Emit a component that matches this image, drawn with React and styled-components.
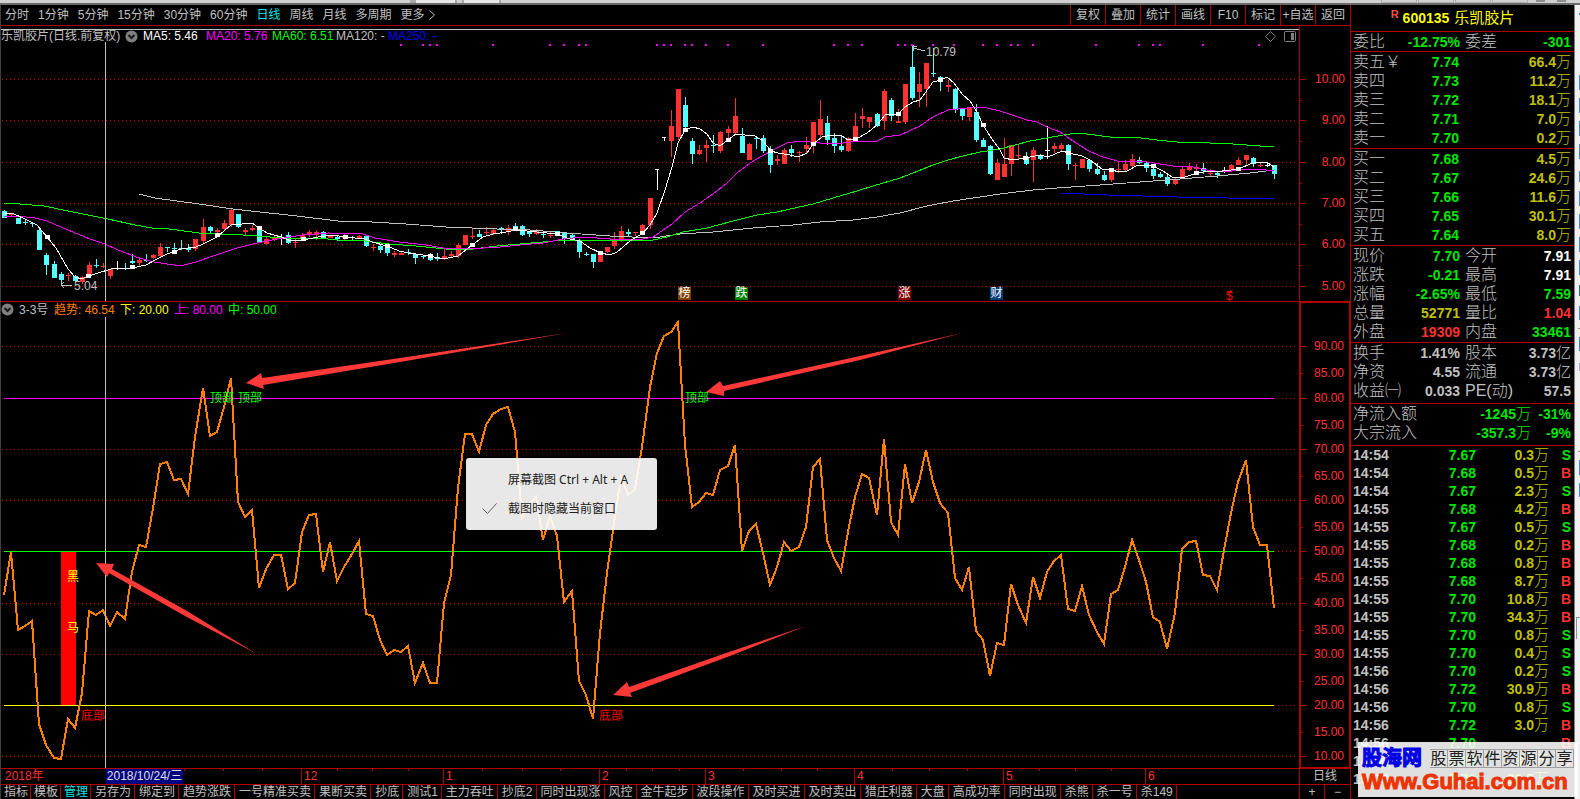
import React, {useState} from "react";
import styled, {createGlobalStyle, css} from "styled-components";

const GlobalStyle = createGlobalStyle`
    * {
        box-sizing: border-box;
    }

    body {
        margin: 0;
        background: #000000;
        color: #c0c0c0;
        font: 12px/14px "Liberation Sans", "Noto Sans CJK SC", sans-serif;
    }

    button {
        margin: 0;
        padding: 0;
        border: 0;
        background: none;
        color: inherit;
        font: inherit;
        white-space: nowrap;
        cursor: pointer;
    }
`;

const RED = "#b00000";
const UP = "#ff3232";
const DOWN = "#54ffff";
const GREEN = "#00e600";
const YELLOW = "#c0c000";

const Page = styled.div`
    display: flex;
    flex-direction: column;
    height: 100vh;
    min-height: 600px;
    overflow: hidden;
`;

const WindowEdge = styled.div`
    height: 5px;
    flex: none;
    background: #d0d0d0;
    border-bottom: 2px solid #6a6a6a;

    svg {
        display: block;
        width: 100%;
        height: 3px;
    }
`;

const Body = styled.div`
    display: flex;
    flex: 1;
    min-height: 0;
`;

const Main = styled.main`
    display: flex;
    flex-direction: column;
    flex: 1;
    min-width: 0;
    border-left: 1px solid #404040;
`;

const Toolbar = styled.nav`
    display: flex;
    justify-content: space-between;
    height: 21px;
    flex: none;
    border-bottom: 1px solid ${RED};
`;

const Periods = styled.div`
    display: flex;
    gap: 9px;
    padding-left: 4px;
`;

const PeriodButton = styled.button`
    color: ${p => p.$active ? "#00e6e6" : "#c0c0c0"};

    svg {
        margin-left: 4px;
        vertical-align: -1px;
    }
`;

const Actions = styled.div`
    display: flex;
`;

const ActionButton = styled.button`
    width: 35px;
    border-left: 1px solid ${RED};
`;

const Panel = styled.section`
    position: relative;
    display: flex;
    flex: ${p => p.$grow} 1 0;
    min-height: 0;
    border-bottom: ${p => p.$line ? `1px solid ${RED}` : "0"};
`;

const PanelBody = styled.div`
    display: flex;
    flex-direction: column;
    flex: 1;
    min-width: 0;
    padding-top: ${p => p.$inset ? "3px" : "0"};
`;

const Legend = styled.div`
    display: flex;
    justify-content: space-between;
    align-items: center;
    flex: none;
    height: ${p => p.$topLine ? "13px" : "15px"};
    border-top: ${p => p.$topLine ? "1px solid #c0c0c0" : "0"};
    white-space: nowrap;
`;

const LegendItems = styled.div`
    display: grid;
    grid-template-columns: ${p => p.$columns};
    align-items: center;
`;

const LegendItem = styled.span`
    color: ${p => p.$color};
`;

const IconButton = styled.button`
    display: flex;
    align-items: center;
`;

const LegendTools = styled.div`
    display: flex;
    gap: 8px;
    padding-right: 3px;
`;

const Plot = styled.div`
    position: relative;
    flex: 1;
    min-height: 0;

    > svg {
        position: absolute;
        width: 100%;
        height: 100%;
    }
`;

const Mark = styled.span`
    position: absolute;
    color: ${p => p.$color};
    font-size: 12px;
    line-height: 14px;
    white-space: nowrap;
`;

const Badge = styled(Mark)`
    width: 13px;
    height: 13px;
    line-height: 13px;
    text-align: center;
    color: #ffffff;
    background: ${p => p.$bg};
`;

const Axis = styled.div`
    position: relative;
    width: 51px;
    flex: none;
    border-left: 1px solid ${RED};
    color: ${UP};

    ${p => p.$framed && css`
        border: 1px solid ${RED};
        border-left-width: 2px;
    `}
`;

const AxisRow = styled.div`
    position: absolute;
    left: 0;
    right: 5px;
    display: flex;
    align-items: center;
    justify-content: space-between;
    height: 14px;
    margin-top: -7px;

    &::before {
        content: "";
        width: ${p => p.$minor ? "2px" : "5px"};
        height: 1px;
        background: ${RED};
    }
`;

const Popup = styled.div`
    position: absolute;
    left: 465px;
    top: 156px;
    width: 191px;
    padding: 7px 0;
    border-radius: 3px;
    background: rgba(255, 255, 255, .91);
    color: #202020;
    font-family: "Noto Sans", "Noto Sans CJK SC", sans-serif;
`;

const PopupItem = styled.button`
    display: grid;
    grid-template-columns: 26px 1fr;
    align-items: center;
    width: 100%;
    height: 29px;
    padding-left: 16px;
    text-align: left;
`;

const Timeline = styled.div`
    display: flex;
    height: 16px;
    flex: none;
    border-top: 1px solid ${RED};
`;

const TimeTrack = styled.div`
    position: relative;
    flex: 1;
    color: ${UP};
    line-height: 15px;
`;

const Month = styled.span`
    position: absolute;
    top: 0;
    height: 15px;
    padding-left: 2px;
    border-left: 1px solid ${p => p.$plain ? "transparent" : RED};
`;

const TimeTick = styled.span`
    position: absolute;
    top: 0;
    width: 1px;
    height: 2px;
    background: ${RED};
`;

const DateTag = styled(Month)`
    width: 77px;
    padding: 0;
    border-left: 0;
    background: #000080;
    color: #e0e0e0;
    text-align: center;
    white-space: nowrap;
`;

const TimeUnit = styled.div`
    width: 51px;
    border-left: 1px solid ${RED};
    line-height: 15px;
    text-align: center;
`;

const Tabs = styled.nav`
    display: flex;
    height: 15px;
    flex: none;
    border-top: 1px solid ${RED};
    overflow: hidden;
`;

const Tab = styled.button`
    padding: ${p => p.$tight ? "0 2px 0 3px" : "0 3px 0 4px"};
    border-right: 1px solid ${RED};
    color: ${p => p.$active ? "#00e6e6" : "#c0c0c0"};
`;

const ZoomButtons = styled.div`
    display: grid;
    grid-template-columns: 25px 26px;
    margin-left: auto;

    button {
        border-left: 1px solid ${RED};
    }
`;

const Side = styled.aside`
    position: relative;
    width: 224px;
    flex: none;
    border-left: 1px solid ${RED};
    overflow: hidden;
`;

const StockTitle = styled.h1`
    display: flex;
    align-items: center;
    justify-content: center;
    gap: 5px;
    height: 27px;
    margin: 0;
    padding-right: 20px;
    border-bottom: 1px solid ${RED};
    color: #ffff00;
    font-size: 14px;
    line-height: 26px;

    sup {
        margin: -8px -1px 0 0;
        color: #ff5050;
        font-size: 11px;
    }

    span {
        font-size: 15px;
        font-weight: 400;
    }
`;

const QuoteTable = styled.table`
    width: 100%;
    table-layout: fixed;
    border-collapse: separate;
    border-spacing: 0;
    border-bottom: ${p => p.$last ? "0" : `1px solid ${RED}`};
    padding-bottom: ${p => p.$gap || 0}px;

    tr {
        height: ${p => p.$row || 19}px;
    }

    th, td {
        padding: 0;
        line-height: 18px;
        white-space: nowrap;
    }
`;

const Label = styled.th`
    width: ${p => p.$width ? `${p.$width}px` : "auto"};
    text-align: left;
    font-size: 16px;
    font-weight: 300;

    && {
        padding-left: ${p => p.$second ? "5px" : "2px"};
    }
`;

const Value = styled.td`
    width: ${p => p.$width ? `${p.$width}px` : "auto"};
    color: ${p => p.$color || "#c0c0c0"};
    font-size: 14px;
    font-weight: 700;
    text-align: ${p => p.$align || "right"};

    && {
        padding-left: ${p => p.$align === "left" ? "2px" : "0"};
        padding-right: ${p => p.$edge ? "3px" : "0"};
    }
`;

const Unit = styled.span`
    font-size: 15px;
    font-weight: 300;
    line-height: 1;
`;

const Watermark = styled.a`
    position: absolute;
    right: 2px;
    bottom: 2px;
    width: 220px;
    height: 55px;
    padding: 5px 0 0 4px;
    background: rgba(255, 255, 255, .88);
    color: #ee3300;
    text-decoration: none;
    z-index: 2;
`;

const WatermarkTop = styled.span`
    display: flex;
    align-items: center;
    gap: 8px;
    height: 22px;

    strong {
        color: #0000e6;
        font-size: 20px;
        line-height: 22px;
        -webkit-text-stroke: 1px #0000e6;
    }
`;

const Slogan = styled.span`
    display: flex;
    color: #202020;
    font-size: 16px;
    line-height: 18px;

    span {
        width: 18px;
        height: 19px;
        border: 1px solid #a0a0a0;
        border-left-width: 0;
        text-align: center;
    }
`;

const Address = styled.span`
    display: block;
    font-size: 22px;
    font-weight: 700;
    line-height: 26px;
    -webkit-text-stroke: 1px #ee3300;
`;

const Gutter = styled.div`
    width: 6px;
    flex: none;
    background: #f0f0f0;
    border-left: 1px solid #808080;

    svg {
        display: block;
    }
`;

const periods = ["分时", "1分钟", "5分钟", "15分钟", "30分钟", "60分钟", "日线", "周线", "月线", "多周期", "更多"];
const actions = ["复权", "叠加", "统计", "画线", "F10", "标记", "+自选", "返回"];
const baseTabs = ["指标", "模板", "管理"];
const tabs = ["另存为", "绑定到", "趋势涨跌", "一号精准买卖", "果断买卖", "抄底", "测试1", "主力吞吐", "抄底2",
    "同时出现涨", "风控", "金牛起步", "波段操作", "及时买进", "及时卖出", "猎庄利器", "大盘", "高成功率", "同时出现", "杀熊", "杀一号", "杀149"];

// one bar: high, low, body top, body bottom, kind (u up, d down, w flat, t limit)
const bars = `210 218 211 218 d|213 217 214 215 u|218 224 218 224 d|220 225 222 223 d|222 227 223 224 d|229 250 230 250 d|253 275 255 265 d|261 278 264 278 d|272 285 274 280 d|273 281 275 276 u
275 282 276 281 d|276 284 277 282 u|262 276 265 275 u|259 268 265 266 d|263 268 266 267 u|269 279 269 276 u|261 270 268 269 w|263 270 268 269 d|254 264 261 263 d|257 266 260 263 u
254 262 260 261 d|254 259 255 258 u|243 257 247 256 u|247 252 247 248 d|243 251 248 249 d|240 250 248 249 d|244 252 248 250 d|239 251 239 249 u|219 243 227 241 u|226 233 227 231 d
228 235 230 232 u|220 231 223 229 u|209 227 210 225 u|214 228 214 227 d|228 236 230 232 u|225 231 228 230 u|228 243 230 242 d|237 245 239 244 u|236 241 238 239 u|234 245 237 238 w
232 244 235 243 d|238 248 242 243 u|233 240 235 239 u|230 237 232 235 u|230 240 232 235 u|231 239 232 238 d|235 238 235 238 u|236 241 237 239 d|234 240 236 238 u|236 240 237 238 d
235 239 236 238 u|235 247 236 246 d|244 251 247 248 u|244 253 246 250 d|244 256 248 253 d|251 257 253 255 u|251 255 253 255 u|249 255 252 253 d|254 264 254 258 d|255 259 256 257 d
253 261 255 260 d|253 261 257 259 d|248 260 256 259 u|251 258 254 256 u|243 258 245 256 u|235 245 235 245 u|229 239 236 237 u|230 237 234 237 d|227 235 232 233 u|228 235 230 234 u
227 234 228 229 d|225 235 228 231 u|223 231 226 231 d|225 236 226 235 d|231 237 232 234 d|229 235 231 234 u|231 238 234 235 d|232 238 235 236 u|231 236 231 236 d|232 244 233 239 d
233 240 235 240 d|239 258 241 252 d|252 256 254 255 d|254 268 254 262 d|254 262 254 262 u|247 253 247 252 u|232 249 241 246 u|226 242 231 239 u|229 236 232 234 d|232 236 232 233 u
224 234 225 233 u|198 229 198 225 u|169 190 169 170 t|137 141 137 138 t|110 157 126 141 u|89 140 89 137 u|97 130 105 127 d|138 164 141 154 d|145 155 150 154 u|140 162 145 148 u
135 153 145 146 d|131 153 132 151 u|126 138 129 133 u|98 135 116 133 u|128 153 136 153 d|143 160 144 160 u|136 149 138 139 d|135 153 138 151 d|146 173 150 165 d|155 165 159 161 u
148 164 150 164 u|145 157 149 153 d|151 162 152 153 u|137 153 145 149 u|122 153 122 145 u|100 138 119 135 u|116 145 123 140 d|133 153 138 146 d|136 152 146 150 d|137 152 138 151 u
113 140 126 140 u|108 128 116 119 u|117 128 117 122 u|113 127 114 126 d|89 130 91 121 u|98 121 100 116 d|109 123 121 123 u|84 124 84 122 u|46 100 67 98 d|72 107 84 92 u
63 107 63 89 u|48 77 73 74 d|76 91 77 80 d|80 92 85 87 u|88 113 89 110 d|108 120 108 116 d|107 121 108 117 u|104 142 112 140 d|138 147 140 147 d|145 175 146 174 d
159 180 163 180 u|138 177 164 177 u|145 176 145 164 u|145 159 155 156 u|152 165 158 164 d|147 182 150 160 u|154 160 156 159 d|126 159 150 151 w|143 153 146 149 u|143 151 145 149 u
144 170 145 164 d|163 180 165 166 u|159 168 159 168 u|159 172 160 169 d|163 175 169 174 d|171 181 175 180 d|170 182 171 180 u|162 173 169 170 u|160 171 164 170 u|154 167 159 166 u
157 164 160 163 d|162 172 163 168 d|166 179 169 176 d|172 178 174 177 d|174 186 177 184 d|178 185 180 184 u|167 179 169 178 u|163 171 167 170 u|164 171 167 169 u|163 174 168 171 d
169 176 173 174 u|171 178 173 175 d|167 173 170 171 w|164 172 165 170 u|157 165 160 165 u|155 165 155 160 u|157 167 158 164 d|162 167 165 166 u|162 167 165 166 w|165 179 165 174 d`
    .split(/[|\n]/)
    .map(line => line.trim().split(" "));

const ma5 = "4,213 14,214 25,219 37,225 47,237 56,248 68,269 75,277 82,279 89,276 98,273 111,269 118,268 132,268 146,265 155,260 167,254 181,249 196,247 203,244 217,237 231,225 242,224 252,223 259,228 267,233 281,237 291,241 303,240 318,237 333,235 345,237 365,239 372,242 387,246 399,251 409,253 430,256 443,259 458,256 472,245 483,237 493,234 500,233 517,230 537,232 557,234 570,239 580,241 590,248 601,253 610,255 617,252 630,241 643,233 650,225 657,213 665,190 672,167 678,143 685,130 693,127 700,129 707,134 713,143 720,146 728,140 736,134 745,135 755,136 763,141 771,151 778,153 790,155 798,157 807,153 813,144 822,137 833,135 842,136 848,140 856,139 867,133 877,125 885,115 898,114 905,107 913,102 920,100 933,82 941,80 947,77 954,83 963,95 970,101 977,112 983,125 992,139 1000,150 1004,158 1013,160 1025,158 1040,155 1048,157 1062,151 1069,153 1082,156 1090,160 1102,169 1111,170 1120,172 1127,171 1138,165 1153,166 1163,171 1172,177 1182,178 1197,173 1210,171 1223,171 1239,169 1250,164 1258,162 1268,163 1274,167";
const ma20 = "4,217 17,216 35,218 47,221 68,230 90,239 105,244 118,250 139,258 154,262 174,265 184,265 196,262 216,255 237,248 257,243 277,239 303,235 328,233 363,234 375,238 399,242 426,245 443,248 466,249 483,248 500,247 520,245 543,243 563,239 583,237 610,239 643,239 653,237 672,224 685,212 700,203 713,194 727,183 737,173 750,163 762,156 777,148 787,143 800,141 820,143 843,143 857,141 877,141 885,137 900,135 920,126 933,117 948,110 957,109 977,107 987,108 1000,111 1018,117 1027,120 1037,122 1047,127 1060,132 1070,139 1087,150 1100,156 1117,161 1147,162 1173,166 1193,167 1207,170 1223,172 1240,170 1257,169 1274,171";
const ma60 = "4,203 20,204 44,206 68,211 88,215 108,219 135,225 152,228 169,229 199,233 216,234 243,235 270,237 287,238 318,238 338,240 365,241 389,244 416,246 446,249 473,249 497,246 520,244 543,242 563,240 653,240 667,237 683,232 707,228 733,221 757,215 777,212 813,204 833,198 857,191 873,186 900,178 913,173 933,165 948,160 963,156 980,152 1000,149 1030,141 1047,138 1063,135 1077,133 1087,134 1110,137 1133,137 1157,140 1177,142 1210,143 1233,144 1274,147";
const ma120 = "139,194 155,198 199,204 233,209 260,212 297,216 338,221 372,222 406,224 446,227 497,229 530,230 543,231 567,233 610,236 653,238 680,234 713,232 753,228 793,225 820,222 853,220 877,217 900,213 927,206 953,201 980,197 1000,194 1033,190 1057,188 1100,185 1140,182 1180,179 1217,176 1250,173 1274,170";
const ma250 = "1061,193 1107,195 1177,197 1228,198 1274,199";

// marker row of the 5-day average, every sixth bar
const ma5Marks = [[47, 237], [88, 276], [132, 267], [174, 252], [217, 235], [259, 228], [303, 239], [345, 237], [387, 246], [430, 256], [472, 245],
    [515, 229], [557, 234], [600, 253], [642, 233], [685, 130], [728, 140], [770, 151], [813, 144], [855, 139], [898, 114], [940, 80], [983, 125],
    [1025, 158], [1068, 153], [1111, 170], [1153, 166], [1196, 173], [1238, 169]];

const eventDots = [401, 423, 430, 437, 493, 550, 564, 579, 586, 657, 664, 671, 685, 692, 706, 728, 763, 834, 848, 862, 898, 905, 912, 933, 954,
    983, 997, 1011, 1018, 1033, 1096, 1139, 1153, 1160, 1203, 1259];

const trend = [595, 552, 630, 626, 621, 724, 745, 758, 759, 719, 728, 693, 611, 615, 610, 626, 612, 619, 572, 545, 547, 508, 464, 462, 480, 479, 494,
    437, 388, 436, 432, 407, 378, 502, 517, 510, 588, 569, 555, 555, 589, 583, 532, 515, 514, 572, 542, 581, 567, 554, 541, 614, 616, 640, 655, 650,
    652, 646, 683, 663, 683, 683, 603, 575, 488, 434, 434, 452, 425, 414, 409, 407, 432, 517, 505, 497, 540, 516, 536, 602, 591, 681, 695, 719, 633,
    573, 523, 477, 495, 489, 447, 387, 353, 336, 332, 322, 445, 507, 502, 493, 495, 470, 466, 445, 551, 531, 524, 553, 585, 567, 542, 551, 547, 527,
    467, 459, 540, 558, 571, 532, 497, 474, 478, 515, 439, 522, 535, 464, 503, 482, 450, 482, 503, 513, 578, 590, 567, 631, 640, 676, 643, 645, 584,
    605, 623, 577, 598, 572, 561, 555, 609, 611, 586, 615, 632, 644, 594, 590, 567, 540, 560, 582, 617, 622, 649, 613, 549, 542, 541, 575, 576, 590,
    550, 513, 482, 460, 527, 545, 545, 608];

const barX = i => Math.floor(4.4 + i * 7.095);

const barColors = {u: UP, d: DOWN, w: "#ffffff", t: "#ffffff"};

const sells = [["卖五￥", "7.74", "66.4"], ["卖四", "7.73", "11.2"], ["卖三", "7.72", "18.1"], ["卖二", "7.71", "7.0"], ["卖一", "7.70", "0.2"]];
const buys = [["买一", "7.68", "4.5"], ["买二", "7.67", "24.6"], ["买三", "7.66", "11.6"], ["买四", "7.65", "30.1"], ["买五", "7.64", "8.0"]];
const quotes = [
    ["现价", "7.70", GREEN, "今开", "7.91", "#ffffff"],
    ["涨跌", "-0.21", GREEN, "最高", "7.91", "#ffffff"],
    ["涨幅", "-2.65%", GREEN, "最低", "7.59", GREEN],
    ["总量", "52771", YELLOW, "量比", "1.04", UP],
    ["外盘", "19309", UP, "内盘", "33461", GREEN],
];
const trades = [
    ["14:54", "7.67", "0.3", "S"], ["14:54", "7.68", "0.5", "B"], ["14:54", "7.67", "2.3", "S"], ["14:55", "7.68", "4.2", "B"],
    ["14:55", "7.67", "0.5", "S"], ["14:55", "7.68", "0.2", "B"], ["14:55", "7.68", "0.8", "B"], ["14:55", "7.68", "8.7", "B"],
    ["14:55", "7.70", "10.8", "B"], ["14:55", "7.70", "34.3", "B"], ["14:55", "7.70", "0.8", "S"], ["14:55", "7.70", "0.4", "S"],
    ["14:56", "7.70", "0.2", "S"], ["14:56", "7.72", "30.9", "B"], ["14:56", "7.70", "0.8", "S"], ["14:56", "7.72", "3.0", "B"],
    ["14:56", "7.70", "", "B"], ["14:56", "7.70", "3.7", "B"], ["15:00", "7.70", "36.7", ""],
];

// turns a point of a drawing area into a percentage position
const at = (box, x, y) => ({left: `${(x - box.x) / box.w * 100}%`, top: `${(y - box.y) / box.h * 100}%`});
const priceBox = {x: 1, y: 42, w: 1298, h: 259};
const trendBox = {x: 1, y: 317, w: 1298, h: 451};
const viewBox = box => `${box.x} ${box.y} ${box.w} ${box.h}`;

const ChevronDot = () => (
    <svg width="13" height="13" viewBox="0 0 13 13">
        <circle cx="6.5" cy="6.5" r="6" fill="#808080"/>
        <path d="M3.5 5l3 3 3-3" fill="none" stroke="#181818" strokeWidth="2"/>
    </svg>
);

const GridLines = ({rows}) => rows.map(y => (
    <line key={y} x1="2" x2="1297" y1={y + 0.5} y2={y + 0.5} stroke="#c00000" strokeDasharray="1 3"/>
));

function PriceChart() {
    return (
        <Panel $grow={275} $line>
            <PanelBody $inset>
                <Legend $topLine>
                    <LegendItems $columns="124px 18px 63px 66px 64px 52px auto">
                        <LegendItem>乐凯胶片(日线.前复权)</LegendItem>
                        <IconButton aria-label="指标菜单"><ChevronDot/></IconButton>
                        <LegendItem $color="#ffffff">MA5: 5.46</LegendItem>
                        <LegendItem $color="#ff00ff">MA20: 5.76</LegendItem>
                        <LegendItem $color="#00ff00">MA60: 6.51</LegendItem>
                        <LegendItem $color="#c0c0c0">MA120: -</LegendItem>
                        <LegendItem $color="#0000ff">MA250: -</LegendItem>
                    </LegendItems>
                    <LegendTools>
                        <IconButton aria-label="标记">
                            <svg width="11" height="11" viewBox="0 0 11 11"><path d="M5.5.5l5 5-5 5-5-5z" fill="none" stroke="#808080"/></svg>
                        </IconButton>
                        <IconButton aria-label="侧栏">
                            <svg width="12" height="11" viewBox="0 0 12 11">
                                <rect x=".5" y=".5" width="11" height="10" rx="1" fill="none" stroke="#808080"/>
                                <path d="M7 2h3v7H7z" fill="#808080"/>
                            </svg>
                        </IconButton>
                    </LegendTools>
                </Legend>
                <Plot>
                    <svg viewBox={viewBox(priceBox)} preserveAspectRatio="none" shapeRendering="crispEdges">
                        <GridLines rows={[79, 120, 162, 203, 244, 286]}/>
                        {eventDots.map(x => <rect key={x} x={x - 1} y="44" width="2" height="2" fill="#ff00ff"/>)}
                        {bars.map(([high, low, top, bottom, kind], i) => (
                            <g key={i} fill={barColors[kind]}>
                                <rect x={barX(i)} y={high} width="1" height={low - high}/>
                                <rect x={barX(i) - 2} y={top} width={kind === "t" ? 4 : 5} height={bottom - top}/>
                            </g>
                        ))}
                        <g fill="none">
                            <polyline points={ma120} stroke="#c0c0c0"/>
                            <polyline points={ma250} stroke="#0000ff"/>
                            <polyline points={ma60} stroke="#00ff00"/>
                            <polyline points={ma20} stroke="#ff00ff"/>
                            <polyline points={ma5} stroke="#ffffff"/>
                            <path d="M61 285h11M64 282l-3 3 3 3M913 48l12 3M913 45v6M913 46h4" stroke="#c0c0c0"/>
                        </g>
                        {ma5Marks.map(([x, y]) => <rect key={x} x={x - 2} y={y - 2} width="5" height="4" fill="#ffffff"/>)}
                        <rect x="105" y="42" width="1" height="259" fill="#c0c0c0"/>
                        <path d="M1227 293l3-3 3 3z" fill="#ff0000"/>
                    </svg>
                    <Mark $color="#c0c0c0" style={at(priceBox, 74, 279)}>5.04</Mark>
                    <Mark $color="#c0c0c0" style={at(priceBox, 926, 45)}>10.79</Mark>
                    <Badge $bg="#804000" style={at(priceBox, 678, 287)}>榜</Badge>
                    <Badge $bg="#008000" style={at(priceBox, 735, 287)}>跌</Badge>
                    <Badge $bg="#800000" style={at(priceBox, 898, 287)}>涨</Badge>
                    <Badge $bg="#003c78" style={at(priceBox, 990, 287)}>财</Badge>
                    <Mark $color="#ff0000" style={at(priceBox, 1226, 289)}>$</Mark>
                </Plot>
            </PanelBody>
            <Axis>
                {[["10.00", 79], ["", 100], ["9.00", 120], ["", 141], ["8.00", 162], ["", 183], ["7.00", 203], ["", 224], ["6.00", 244], ["", 265], ["5.00", 286]]
                    .map(([text, y]) => (
                        <AxisRow key={y} $minor={!text} style={{top: `${(y - 26) / 275 * 100}%`}}>{text}</AxisRow>
                    ))}
            </Axis>
        </Panel>
    )
}

function TrendChart() {

    const [menuOpen, setMenuOpen] = useState(true);

    const axisRows = [346, 373, 398, 425, 449, 476, 500, 527, 551, 578, 603, 630, 654, 681, 705, 732, 756];

    return (
        <Panel $grow={466}>
            <PanelBody>
                <Legend>
                    <LegendItems $columns="18px 35px 66px 54px 54px auto">
                        <IconButton aria-label="指标菜单"><ChevronDot/></IconButton>
                        <LegendItem>3-3号</LegendItem>
                        <LegendItem $color="#ff8000">趋势: 46.54</LegendItem>
                        <LegendItem $color="#ffff00">下: 20.00</LegendItem>
                        <LegendItem $color="#ff00ff">上: 80.00</LegendItem>
                        <LegendItem $color="#00ff00">中: 50.00</LegendItem>
                    </LegendItems>
                </Legend>
                <Plot>
                    <svg viewBox={viewBox(trendBox)} preserveAspectRatio="none">
                        <g shapeRendering="crispEdges">
                            <GridLines rows={[346, 398, 449, 500, 551, 603, 654, 705, 756]}/>
                            <rect x="61" y="551" width="15" height="154" fill="#ff0000"/>
                            <rect x="4" y="398" width="1270" height="1" fill="#ff00ff"/>
                            <rect x="4" y="551" width="1270" height="1" fill="#00ff00"/>
                            <rect x="4" y="705" width="1270" height="1" fill="#ffff00"/>
                            <polyline
                                points={trend.map((y, i) => `${barX(i)},${y}`).join(" ")}
                                fill="none" stroke="#ff8000" strokeWidth="2"
                            />
                            <rect x="105" y="317" width="1" height="451" fill="#c0c0c0"/>
                        </g>
                        <g fill="#ff3838">
                            <path d="M246 383l15-10 1 5 138-20 167-25-167 29-137 23 1 4z"/>
                            <path d="M706 392l14-11 3 5 137-30 102-23-102 27-136 31v5z"/>
                            <path d="M613 695l14-13 2 5 100-35 77-26-76 30-100 37 2 4z"/>
                            <path d="M96 563l18 1-2 5 75 42 70 43-72-38-76-43-2 4z"/>
                        </g>
                    </svg>
                    <Mark $color="#00ff00" style={at(trendBox, 210, 391)}>顶部</Mark>
                    <Mark $color="#00ff00" style={at(trendBox, 238, 391)}>顶部</Mark>
                    <Mark $color="#00ff00" style={at(trendBox, 685, 391)}>顶部</Mark>
                    <Mark $color="#ffff00" style={at(trendBox, 67, 570)}>黑</Mark>
                    <Mark $color="#ffff00" style={at(trendBox, 67, 621)}>马</Mark>
                    <Mark $color="#ff0000" style={at(trendBox, 81, 709)}>底部</Mark>
                    <Mark $color="#ff0000" style={at(trendBox, 599, 709)}>底部</Mark>
                </Plot>
            </PanelBody>
            <Axis $framed>
                {axisRows.map((y, i) => (
                    <AxisRow key={y} $minor={i % 2 === 1} style={{top: `${(y - 303) / 464 * 100}%`}}>{90 - i * 5}.00</AxisRow>
                ))}
            </Axis>
            {menuOpen && <Popup>
                <PopupItem onClick={() => setMenuOpen(false)}><span/>屏幕截图 Ctrl + Alt + A</PopupItem>
                <PopupItem onClick={() => setMenuOpen(false)}>
                    <svg width="15" height="11" viewBox="0 0 15 11"><path d="M.5 5.5l5 5 9-10" fill="none" stroke="#606060"/></svg>
                    截图时隐藏当前窗口
                </PopupItem>
            </Popup>}
        </Panel>
    )
}

function TimeAxis() {
    const left = x => ({left: `${(x - 1) / 1298 * 100}%`});

    return (
        <Timeline>
            <TimeTrack>
                <Month $plain style={left(2)}>2018年</Month>
                {[184, 223, 262, 337, 372, 408, 482, 522, 560, 626, 652, 679, 743, 781, 817, 892, 929, 967, 1039, 1075, 1111].map(x => (
                    <TimeTick key={x} style={left(x)}/>
                ))}
                {[["12", 301], ["1", 443], ["2", 599], ["3", 705], ["4", 854], ["5", 1003], ["6", 1145]].map(([text, x]) => (
                    <Month key={text} style={left(x)}>{text}</Month>
                ))}
                <DateTag style={left(106)}>2018/10/24/三</DateTag>
            </TimeTrack>
            <TimeUnit>日线</TimeUnit>
        </Timeline>
    )
}

function OrderBook({rows}) {
    return (
        <QuoteTable $gap={1}>
            <tbody>
            {rows.map(([name, price, amount]) => (
                <tr key={name}>
                    <Label scope="row" $width={58}>{name}</Label>
                    <Value $color={GREEN} $width={50}>{price}</Value>
                    <Value $color={YELLOW} $edge>{amount}<Unit>万</Unit></Value>
                </tr>
            ))}
            </tbody>
        </QuoteTable>
    )
}

function PairTable({rows, gap}) {
    return (
        <QuoteTable $gap={gap}>
            <tbody>
            {rows.map(([a, av, ac, b, bv, bc, unit]) => (
                <tr key={a}>
                    <Label scope="row" $width={50}>{a}</Label>
                    <Value $color={ac} $width={59}>{av}</Value>
                    <Label scope="row" $width={52} $second>{b}</Label>
                    <Value $color={bc} $edge>{bv}{unit && <Unit>{unit}</Unit>}</Value>
                </tr>
            ))}
            </tbody>
        </QuoteTable>
    )
}

function StockSide() {
    return (
        <Side>
            <StockTitle><sup>R</sup>600135 <span>乐凯胶片</span></StockTitle>
            <PairTable rows={[["委比", "-12.75%", GREEN, "委差", "-301", GREEN]]}/>
            <OrderBook rows={sells}/>
            <OrderBook rows={buys}/>
            <PairTable rows={quotes} gap={1}/>
            <PairTable
                gap={3}
                rows={[
                    ["换手", "1.41%", "#c0c0c0", "股本", "3.73", "#c0c0c0", "亿"],
                    ["净资", "4.55", "#c0c0c0", "流通", "3.73", "#c0c0c0", "亿"],
                    ["收益㈠", "0.033", "#c0c0c0", "PE(动)", "57.5", "#c0c0c0"],
                ]}
            />
            <QuoteTable $gap={3}>
                <tbody>
                <tr>
                    <Label scope="row" $width={80}>净流入额</Label>
                    <Value $color={GREEN} $width={100}>-1245<Unit>万</Unit></Value>
                    <Value $color={GREEN} $edge>-31%</Value>
                </tr>
                <tr>
                    <Label scope="row">大宗流入</Label>
                    <Value $color={GREEN}>-357.3<Unit>万</Unit></Value>
                    <Value $color={GREEN} $edge>-9%</Value>
                </tr>
                </tbody>
            </QuoteTable>
            <QuoteTable $row={18} $last>
                <tbody>
                {trades.map(([time, price, amount, side], i) => (
                    <tr key={i}>
                        <Value $align="left" $width={55}>{time}</Value>
                        <Value $color={GREEN} $width={70}>{price}</Value>
                        <Value $color={YELLOW} $width={73}>{amount}{amount && <Unit>万</Unit>}</Value>
                        <Value $color={side === "S" ? GREEN : UP} $edge>{side}</Value>
                    </tr>
                ))}
                </tbody>
            </QuoteTable>
        </Side>
    )
}

const sideMarks = [[8, 2], [70, 15], [93, 15], [116, 15], [139, 15], [166, 11], [186, 15], [209, 15], [232, 15], [255, 15], [280, 11], [301, 14], [332, 14], [455, 15], [478, 14]];

export default function App() {

    const [period, setPeriod] = useState("日线");
    const [tab, setTab] = useState("管理");

    return (
        <React.Fragment>
            <GlobalStyle/>
            <Page>
                <WindowEdge>
                    <svg viewBox="0 0 1580 3" preserveAspectRatio="none" shapeRendering="crispEdges">
                        <path d="M410 0h47v3h-47zM462 0h39v3h-39z" fill="#a8a8a8"/>
                        <path d="M416 0h39v3h-39zM464 0h35v3h-35z" fill="#e8e8e8"/>
                        <path d="M1381 0v2h35V0M1418 0v2h35V0M1455 0v2h35V0M1492 0v2h35V0" fill="none" stroke="#b0b0b0"/>
                        <path d="M1536 0h9v2h-9zM1557 0h9v2h-9z" fill="#909090"/>
                    </svg>
                </WindowEdge>
                <Body>
                    <Main>
                        <Toolbar>
                            <Periods>
                                {periods.map(name => (
                                    <PeriodButton key={name} $active={name === period} onClick={() => setPeriod(name)}>
                                        {name}
                                        {name === "更多" && <svg width="6" height="10" viewBox="0 0 6 10"><path d="M.5.5l5 4.500-5 4.500" fill="none" stroke="#c0c0c0"/></svg>}
                                    </PeriodButton>
                                ))}
                            </Periods>
                            <Actions>
                                {actions.map(name => <ActionButton key={name}>{name}</ActionButton>)}
                            </Actions>
                        </Toolbar>
                        <PriceChart/>
                        <TrendChart/>
                        <TimeAxis/>
                        <Tabs>
                            {[...baseTabs, ...tabs].map(name => (
                                <Tab key={name} $tight={baseTabs.includes(name)} $active={name === tab} onClick={() => setTab(name)}>{name}</Tab>
                            ))}
                            <ZoomButtons>
                                <button aria-label="放大">+</button>
                                <button aria-label="缩小">−</button>
                            </ZoomButtons>
                        </Tabs>
                    </Main>
                    <StockSide/>
                    <Gutter>
                        <svg width="5" height="794" viewBox="0 0 5 794" shapeRendering="crispEdges">
                            {sideMarks.map(([y, h]) => <rect key={y} x="4" y={y} width="1" height={h} fill={y === 280 ? "#108060" : "#3c82f0"}/>)}
                            <path d="M3 323h2v1H3zM3 446h2v1H3zM1 612h4v1H1zM1 612h1v22H1z" fill="#909090"/>
                            <path d="M4 358h1v8H4z" fill="#b8a8e0"/>
                        </svg>
                    </Gutter>
                </Body>
                <Watermark href="#guhai">
                    <WatermarkTop>
                        <strong>股海网</strong>
                        <Slogan>{[..."股票软件资源分享"].map(c => <span key={c}>{c}</span>)}</Slogan>
                    </WatermarkTop>
                    <Address>Www.Guhai.com.cn</Address>
                </Watermark>
            </Page>
        </React.Fragment>
    )
}
